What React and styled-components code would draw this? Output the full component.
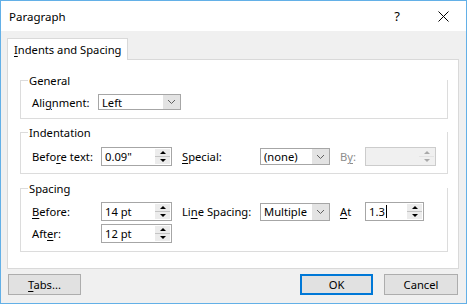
import React from "react";
import styled, { createGlobalStyle } from "styled-components";

const GlobalStyle = createGlobalStyle`
  body {
    margin: 0;
    font-family: "Noto Sans", "Segoe UI", Arial, sans-serif;
    font-size: 11.2px;
    color: #000;
  }
  * { box-sizing: border-box; }
`;

const Window = styled.div`
  width: 467px;
  height: 304px;
  border: 1px solid #63b0e7;
  background: #f0f0f0;
  display: flex;
  flex-direction: column;
  white-space: nowrap;
`;

const TitleBar = styled.div`
  height: 30px;
  background: #fff;
  display: flex;
  align-items: center;
`;

const Title = styled.div`
  flex: 1;
  padding-left: 8px;
  font-size: 11.5px;
`;

const CaptionButton = styled.div`
  width: 46px;
  height: 30px;
  display: flex;
  align-items: center;
  justify-content: center;
  font-size: 13px;
`;

const Body = styled.div`
  flex: 1;
  display: flex;
  flex-direction: column;
  padding: 7px 7px 8px 6px;
`;

const TabStrip = styled.div`
  display: flex;
`;

const Tab = styled.div`
  position: relative;
  width: 121px;
  height: 22px;
  margin-bottom: -1px;
  padding-left: 6px;
  border: 1px solid #d9d9d9;
  border-bottom: none;
  background: #fff;
  display: flex;
  align-items: center;
`;

const Panel = styled.div`
  height: 210px;
  border: 1px solid #d9d9d9;
  background: #fff;
  padding: 20px 10px 16px 12px;
  display: flex;
  flex-direction: column;
`;

const Group = styled.div`
  margin-top: ${(p) => p.$gap || 0}px;
  border: 1px solid #dcdcdc;
  border-top: none;
  padding: 0 0 ${(p) => p.$bottom}px 0;
`;

const GroupHead = styled.div`
  height: 14px;
  margin-top: -7px;
  margin-left: -1px;
  margin-bottom: ${(p) => p.$after}px;
  display: flex;
  align-items: center;
  &::before {
    content: "";
    width: 8px;
    height: 1px;
    background: #dcdcdc;
    margin-right: 1px;
  }
`;

const Rows = styled.div`
  display: flex;
  flex-direction: column;
  gap: 3px;
  padding-left: 11px;
`;

const Row = styled.div`
  display: flex;
  align-items: center;
`;

const Label = styled.div`
  width: ${(p) => p.$w}px;
  color: ${(p) => (p.$disabled ? "#8d8d8d" : "#000")};
  padding-left: ${(p) => p.$pl || 0}px;
`;

const Key = styled.span`
  text-decoration: underline;
  text-underline-offset: 2px;
`;

const Select = styled.div`
  width: ${(p) => p.$w}px;
  height: ${(p) => p.$h}px;
  border: 1px solid #a6a6a6;
  background: #fff;
  display: flex;
  align-items: stretch;
`;

const SelectValue = styled.div`
  flex: 1;
  padding-left: 3px;
  display: flex;
  align-items: center;
`;

const SelectButton = styled.div`
  width: 17px;
  background: #e3e3e3;
  display: flex;
  align-items: center;
  justify-content: center;
`;

const Spinner = styled.div`
  width: ${(p) => p.$w}px;
  height: 19px;
  border: 1px solid ${(p) => (p.$disabled ? "#cccccc" : "#a6a6a6")};
  background: ${(p) => (p.$disabled ? "#f0f0f0" : "#fff")};
  display: flex;
  align-items: stretch;
`;

const SpinValue = styled.div`
  flex: 1;
  padding-left: 3px;
  display: flex;
  align-items: center;
`;

const Caret = styled.span`
  width: 1px;
  height: 13px;
  background: #000;
  margin-left: 1px;
`;

const Spin = styled.div`
  width: 15px;
  margin: 1px;
  display: flex;
  flex-direction: column;
  gap: 1px;
  background: ${(p) => (p.$disabled ? "#e3e3e3" : "#c4c4c4")};
`;

const SpinButton = styled.div`
  flex: 1;
  background: ${(p) => (p.$disabled ? "#f0f0f0" : "#ececec")};
  display: flex;
  align-items: center;
  justify-content: center;
  &::after {
    content: "";
    border-left: 3px solid transparent;
    border-right: 3px solid transparent;
    ${(p) => (p.$down ? "border-top" : "border-bottom")}: 3px solid
      ${(p) => (p.$disabled ? "#a9a9a9" : "#000")};
  }
`;

const Footer = styled.div`
  margin-top: 5px;
  padding: 0 1px 0 1px;
  display: flex;
  align-items: center;
`;

const Button = styled.div`
  width: ${(p) => p.$w}px;
  height: 21px;
  margin-left: ${(p) => p.$ml || 0}px;
  background: #e1e1e1;
  border: ${(p) => (p.$default ? "2px solid #0078d7" : "1px solid #adadad")};
  display: flex;
  align-items: center;
  justify-content: center;
`;

const Spacer = styled.div`
  flex: 1;
`;

function Chevron() {
  return (
    <svg width="9" height="6" viewBox="0 0 9 6">
      <path d="M1 1 L4.5 4.5 L8 1" fill="none" stroke="#606060" strokeWidth="1" />
    </svg>
  );
}

function Dropdown({ value, w, h = 17 }) {
  return (
    <Select $w={w} $h={h}>
      <SelectValue>{value}</SelectValue>
      <SelectButton>
        <Chevron />
      </SelectButton>
    </Select>
  );
}

function SpinBox({ value, w = 71, disabled, caret }) {
  return (
    <Spinner $w={w} $disabled={disabled}>
      <SpinValue>
        {value}
        {caret && <Caret />}
      </SpinValue>
      <Spin $disabled={disabled}>
        <SpinButton $disabled={disabled} />
        <SpinButton $disabled={disabled} $down />
      </Spin>
    </Spinner>
  );
}

export default function App() {
  return (
    <>
      <GlobalStyle />
      <Window>
        <TitleBar>
          <Title>Paragraph</Title>
          <CaptionButton>?</CaptionButton>
          <CaptionButton>
            <svg width="11" height="11" viewBox="0 0 11 11">
              <path d="M0.5 0.5 L10.5 10.5 M10.5 0.5 L0.5 10.5" stroke="#000" strokeWidth="1" />
            </svg>
          </CaptionButton>
        </TitleBar>
        <Body>
          <TabStrip>
            <Tab>
              <span>
                <Key>I</Key>ndents and Spacing
              </span>
            </Tab>
          </TabStrip>
          <Panel>
            <Group $bottom={8}>
              <GroupHead $after={7}>General</GroupHead>
              <Rows>
                <Row>
                  <Label $w={66}>
                    Ali<Key>g</Key>nment:
                  </Label>
                  <Dropdown value="Left" w={83} h={16} />
                </Row>
              </Rows>
            </Group>
            <Group $gap={13} $bottom={7}>
              <GroupHead $after={8}>Indentation</GroupHead>
              <Rows>
                <Row>
                  <Label $w={69}>
                    Befo<Key>r</Key>e text:
                  </Label>
                  <SpinBox value={'0.09"'} />
                  <Label $w={88} $pl={10}>
                    <Key>S</Key>pecial:
                  </Label>
                  <Dropdown value="(none)" w={70} />
                  <Label $w={35} $pl={10} $disabled>
                    B<Key>y</Key>:
                  </Label>
                  <SpinBox value="" disabled />
                </Row>
              </Rows>
            </Group>
            <Group $gap={14} $bottom={8}>
              <GroupHead $after={7}>Spacing</GroupHead>
              <Rows>
                <Row>
                  <Label $w={69}>
                    <Key>B</Key>efore:
                  </Label>
                  <SpinBox value="14 pt" />
                  <Label $w={88} $pl={10}>
                    Li<Key>n</Key>e Spacing:
                  </Label>
                  <Dropdown value="Multiple" w={70} h={18} />
                  <Label $w={35} $pl={10}>
                    <Key>A</Key>t
                  </Label>
                  <SpinBox value="1.3" w={59} caret />
                </Row>
                <Row>
                  <Label $w={69}>
                    Aft<Key>e</Key>r:
                  </Label>
                  <SpinBox value="12 pt" />
                </Row>
              </Rows>
            </Group>
          </Panel>
          <Footer>
            <Button $w={73}>
              <span>
                <Key>T</Key>abs...
              </span>
            </Button>
            <Spacer />
            <Button $w={73} $default>
              OK
            </Button>
            <Button $w={74} $ml={11}>
              Cancel
            </Button>
          </Footer>
        </Body>
      </Window>
    </>
  );
}
